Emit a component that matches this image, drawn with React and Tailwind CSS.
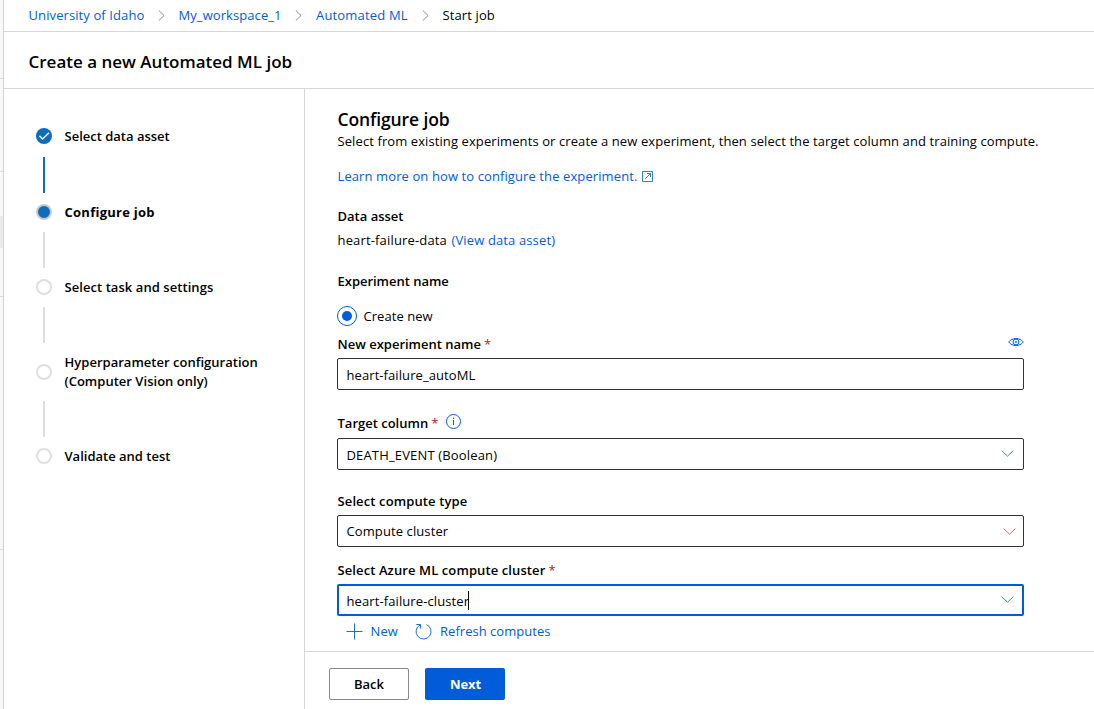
const steps = [
  { label: 'Select data asset', state: 'done', track: 'tracking-[0px]', row: 'h-5', line: 'mt-[11px] mb-[9px] bg-[#0f6cbd]' },
  { label: 'Configure job', state: 'current', track: 'tracking-[0.25px]', row: 'h-5', line: 'mt-[10px] mb-[9px] bg-[#dedede]' },
  { label: 'Select task and settings', state: 'todo', track: 'tracking-[0.06px]', row: 'h-5', line: 'my-[10px] bg-[#dedede]' },
  { label: 'Hyperparameter configuration', second: '(Computer Vision only)', state: 'todo', track: 'tracking-[0.02px]', row: 'h-[38px]', line: 'mt-[10px] mb-[9px] bg-[#dedede]' },
  { label: 'Validate and test', state: 'todo', track: 'tracking-[0px]', row: 'h-5' },
];

function StepIcon({ state }) {
  if (state === 'done') {
    return (
      <svg className="size-4 shrink-0" viewBox="0 0 16 16" fill="none">
        <circle cx="8" cy="8" r="8" fill="#0f6cbd" />
        <path d="M3.4 7.8 6.6 11 13 4.800" stroke="#e4effa" strokeWidth="1.6" />
      </svg>
    );
  }
  if (state === 'current') {
    return <span className="size-4 shrink-0 rounded-full border-2 border-[#c9c9cd] bg-[#0f6cbd]" />;
  }
  return <span className="size-4 shrink-0 rounded-full border-2 border-[#dfdfdf] bg-white" />;
}

function Crumb({ children, className }) {
  return <span className={`block whitespace-nowrap ${className}`}>{children}</span>;
}

function CrumbArrow({ className = '' }) {
  return (
    <svg className={`h-[11px] w-[7px] shrink-0 ${className}`} viewBox="0 0 7 11" fill="none">
      <path d="M.8.5 6 5.5.8 10.5" stroke="#8f8f8f" />
    </svg>
  );
}

function Chevron({ className }) {
  return (
    <svg className={`h-[7px] w-[13px] shrink-0 ${className}`} viewBox="0 0 13 7" fill="none" stroke="currentColor">
      <path d="M.6.6 6.5 6.2 12.4.6" />
    </svg>
  );
}

function Label({ children, className = '', track, required }) {
  return (
    <div className={`flex h-5 items-center pl-[0.5px] font-semibold ${className}`}>
      <span className={`whitespace-nowrap ${track}`}>{children}</span>
      {required && <span className="ml-[3px] font-normal text-[#a4262c]">*</span>}
    </div>
  );
}

export default function App() {
  return (
    <div className="flex h-[709px] w-[1094px] overflow-hidden bg-white font-['Open_Sans','Noto_Sans',sans-serif] text-[13px] leading-5 text-black">
      <div className="flex w-1 shrink-0 flex-col border-r border-[#d2d2d2] bg-[#f8f8f8]">
        <div className="h-[79px] border-b border-[#dcdcdc]" />
        <div className="h-[93px] border-b border-[#dcdcdc]" />
        <div className="mt-11 h-8 bg-[#ebebeb]" />
        <div className="h-[49px] border-b border-[#dcdcdc]" />
        <div className="h-[253px] border-b border-[#dcdcdc]" />
      </div>

      <div className="flex min-w-0 flex-1 flex-col">
        <nav className="flex h-8 shrink-0 items-center border-b border-[#d6d6d6] pb-px pl-[24.5px] text-[#015cda]">
          <Crumb className="w-[129px] tracking-[0.1px]">University of Idaho</Crumb>
          <CrumbArrow />
          <Crumb className="ml-[14px] w-[116.5px] tracking-[0.08px]">My_workspace_1</Crumb>
          <CrumbArrow />
          <Crumb className="ml-[14px] w-[105.5px] tracking-[0.18px]">Automated ML</Crumb>
          <CrumbArrow />
          <Crumb className="ml-[14px] tracking-[0.12px] text-black">Start job</Crumb>
        </nav>
        <header className="flex h-[57px] shrink-0 items-center border-b border-[#d6d6d6] pt-[3px] pl-[24.5px]">
          <h1 className="text-[17px] leading-6 font-semibold tracking-[0px]">Create a new Automated ML job</h1>
        </header>

        <div className="flex min-h-0 flex-1">
          <aside className="flex w-[301px] shrink-0 flex-col border-r border-[#d6d6d6] pt-[37px] pl-8">
            {steps.map((s) => (
              <div key={s.label}>
                <div className={`flex items-center gap-[12.5px] ${s.row}`}>
                  <StepIcon state={s.state} />
                  <div className={`leading-[19px] whitespace-nowrap ${s.track} ${s.state === 'current' ? 'font-bold' : 'font-semibold'}`}>
                    <div>{s.label}</div>
                    {s.second && <div>{s.second}</div>}
                  </div>
                </div>
                {s.line && <div className={`ml-[7px] h-9 w-0.5 ${s.line}`} />}
              </div>
            ))}
          </aside>

          <div className="flex min-w-0 flex-1 flex-col">
            <main className="flex w-[719px] flex-1 flex-col pt-[18px] pl-8">
              <h2 className="pl-[0.5px] text-[17.5px] leading-6 font-semibold tracking-[-0.12px]">Configure job</h2>
              <p className="pl-[0.5px] tracking-[0.095px] whitespace-nowrap">
                Select from existing experiments or create a new experiment, then select the target column and training compute.
              </p>
              <a className="mt-[15px] flex items-center pl-[0.5px] tracking-[0.1px] text-[#015cda]">
                Learn more on how to configure the experiment.
                <svg className="ml-[4.5px] size-[11px]" viewBox="0 0 11 11" fill="none" stroke="currentColor" strokeWidth=".8">
                  <path d="M.5.5h10v10H.5ZM5 2.500h3.500V6M8.500 2.500 3 8" />
                </svg>
              </a>
              <Label className="mt-5" track="tracking-[0px]">Data asset</Label>
              <div className="mt-1 flex gap-[4.5px] pl-[0.5px]">
                <span className="tracking-[0.16px]">heart-failure-data</span>
                <a className="tracking-[0.13px] text-[#015cda]">(View data asset)</a>
              </div>
              <Label className="mt-[21px]" track="tracking-[-0.02px]">Experiment name</Label>
              <div className="mt-[15px] flex items-center gap-[6.5px]">
                <span className="flex size-5 items-center justify-center rounded-full border border-[#015cda]">
                  <span className="size-2.5 rounded-full bg-[#015cda]" />
                </span>
                <span className="tracking-[0.05px]">Create new</span>
              </div>
              <div className="mt-2 flex justify-between">
                <Label track="tracking-[0px]" required>New experiment name</Label>
                <svg className="mt-1 h-2 w-4" viewBox="0 0 16 8" fill="none" stroke="#015cda">
                  <path d="M.7 4C2.400 1.700 5 .5 8 .5S13.600 1.700 15.300 4C13.600 6.300 11 7.500 8 7.500S2.400 6.300.7 4Z" />
                  <circle cx="8" cy="4" r="2.900" />
                  <circle cx="8" cy="4" r=".9" fill="#015cda" stroke="none" />
                </svg>
              </div>
              <div className="mt-1 flex h-8 items-center rounded-[2px] border border-[#323130] px-[8.5px] pt-0.5">
                <span className="tracking-[0.08px]">heart-failure_autoML</span>
              </div>
              <div className="mt-[23px] flex">
                <Label track="tracking-[0px]" required>Target column</Label>
                <svg className="mt-px ml-[7.5px] size-[15px]" viewBox="0 0 15 15" fill="none" stroke="#015cda">
                  <circle cx="7.500" cy="7.500" r="7" />
                  <path d="M7.500 6v5M7.500 3.700v1.200" />
                </svg>
              </div>
              <div className="mt-[5px] flex h-8 items-center justify-between rounded-[2px] border border-[#323130] pr-[9px] pl-[8.5px] pt-0.5">
                <span className="tracking-[0.16px]">DEATH_EVENT (Boolean)</span>
                <Chevron className="-mt-[3px] text-[#4f8c96]" />
              </div>
              <Label className="mt-[21px]" track="tracking-[0.12px]">Select compute type</Label>
              <div className="mt-1 flex h-8 items-center justify-between rounded-[2px] border border-[#323130] pr-[7px] pl-[8.5px]">
                <span className="tracking-[0.1px]">Compute cluster</span>
                <Chevron className="text-[#c0695f]" />
              </div>
              <Label className="mt-[13px]" track="tracking-[0.1px]" required>Select Azure ML compute cluster</Label>
              <div className="mt-1 flex h-8 items-center justify-between rounded-[2px] border-2 border-[#015cda] pr-2 pl-[7.5px] pt-0.5">
                <span className="flex items-center">
                  <span className="tracking-[0.1px]">heart-failure-cluster</span>
                  <span className="-mt-px -ml-px h-[19px] w-px bg-black" />
                </span>
                <Chevron className="-mt-[3px] text-[#55858f]" />
              </div>
              <div className="mt-[5px] flex items-center pl-[9px] text-[#015cda]">
                <svg className="size-[17px]" viewBox="0 0 17 17" fill="none" stroke="currentColor" strokeWidth=".9">
                  <path d="M8.500.5v16M.5 8.500h16" />
                </svg>
                <span className="ml-[7.5px] w-[44.5px] tracking-[0.1px]">New</span>
                <svg className="size-[17px]" viewBox="0 0 17 17" fill="none" stroke="currentColor" strokeWidth=".9">
                  <path d="M11.500 1.600A7.500 7.500 0 1 1 5 1.900M1.300 1.500H5.500V5.500" />
                </svg>
                <span className="ml-2 tracking-[0.03px]">Refresh computes</span>
              </div>
            </main>
            <footer className="flex h-[58px] shrink-0 gap-4 border-t border-[#d6d6d6] pt-4 pl-6">
              <button className="h-8 w-20 rounded-[2px] border border-[#8a8886] font-semibold">Back</button>
              <button className="h-8 w-20 rounded-[2px] bg-[#015cda] pl-px font-bold tracking-[-0.05px] text-white">Next</button>
            </footer>
          </div>
        </div>
      </div>
    </div>
  );
}
